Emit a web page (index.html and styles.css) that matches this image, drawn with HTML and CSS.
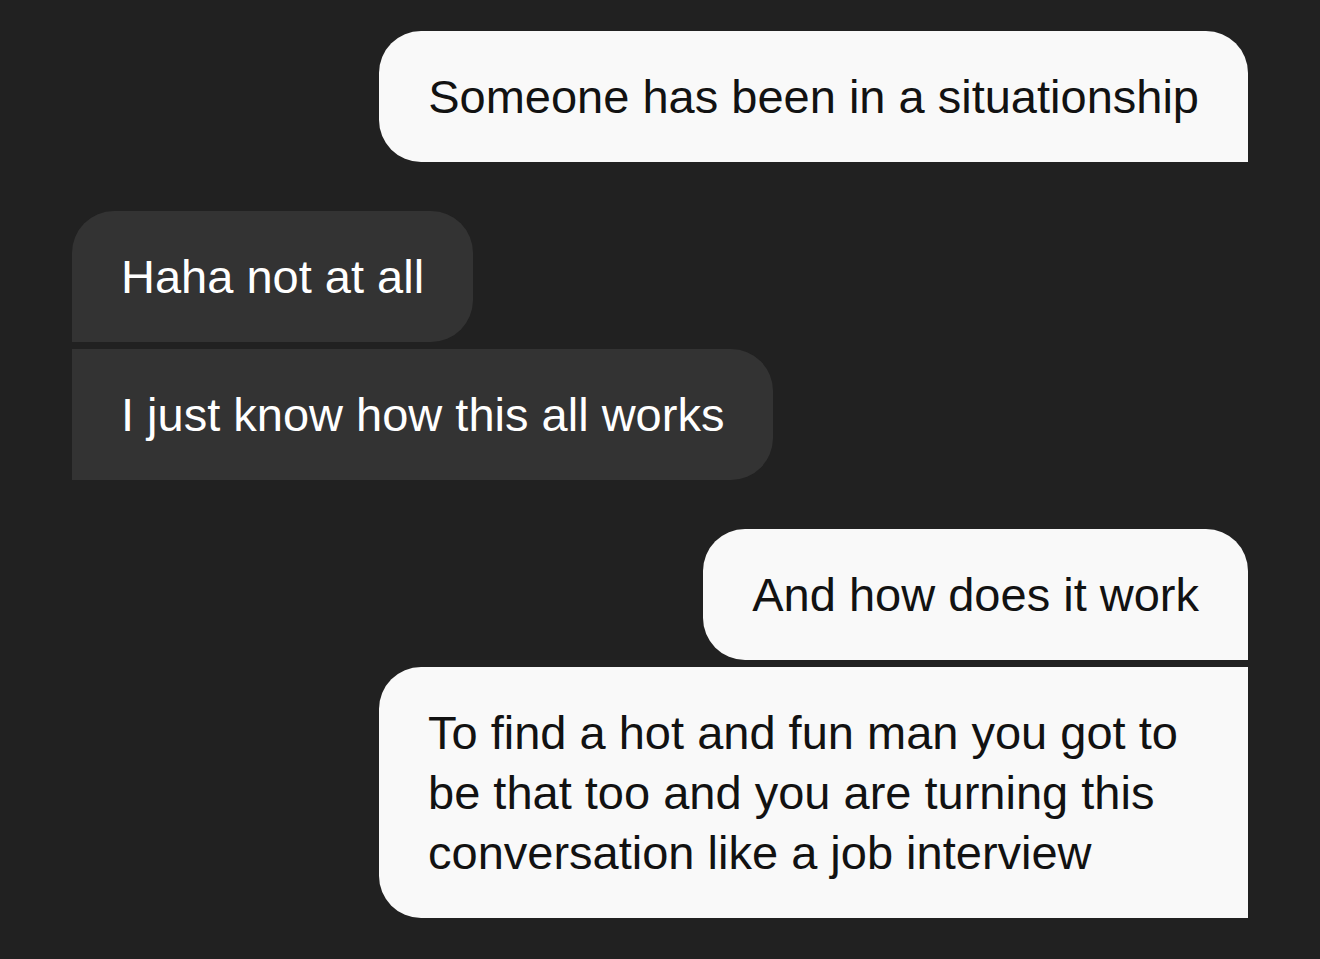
FILE: index.html
```html
<!DOCTYPE html>
<html lang="en">
<head>
    <meta charset="UTF-8">
    <meta name="viewport" content="width=device-width, initial-scale=1.0">
    <title>Chat</title>
    <link rel="stylesheet" href="styles.css">
</head>
<body>
    <div class="chat">
        <div class="group sent">
            <div class="bubble single">Someone has been in a situationship</div>
        </div>

        <div class="group received">
            <div class="bubble first">Haha not at all</div>
            <div class="bubble last">I just know how this all works</div>
        </div>

        <div class="group sent">
            <div class="bubble first">And how does it work</div>
            <div class="bubble last">To find a hot and fun man you got to be that too and you are turning this conversation like a job interview</div>
        </div>
    </div>
</body>
</html>
```

FILE: styles.css
```css
body {
    margin: 0;
    background-color: #212121;
    font-family: "Liberation Sans", Arial, sans-serif;
}
.chat {
    display: flex;
    flex-direction: column;
    gap: 49px;
    padding: 31px 72px;
}
.group {
    display: flex;
    flex-direction: column;
    gap: 7px;
}
.group.sent {
    align-items: flex-end;
}
.group.received {
    align-items: flex-start;
}
.bubble {
    max-width: 771px;
    padding: 36px 49px 35px;
    font-size: 47px;
    line-height: 60px;
}
.sent .bubble {
    background-color: #f9f9f9;
    color: #121212;
}
.received .bubble {
    background-color: #333333;
    color: #ffffff;
}
.sent .single,
.sent .first {
    border-radius: 42px 42px 0 42px;
}
.sent .last {
    border-radius: 42px 0 0 42px;
}
.received .first {
    border-radius: 42px 42px 42px 0;
}
.received .last {
    border-radius: 0 42px 42px 0;
}
```
